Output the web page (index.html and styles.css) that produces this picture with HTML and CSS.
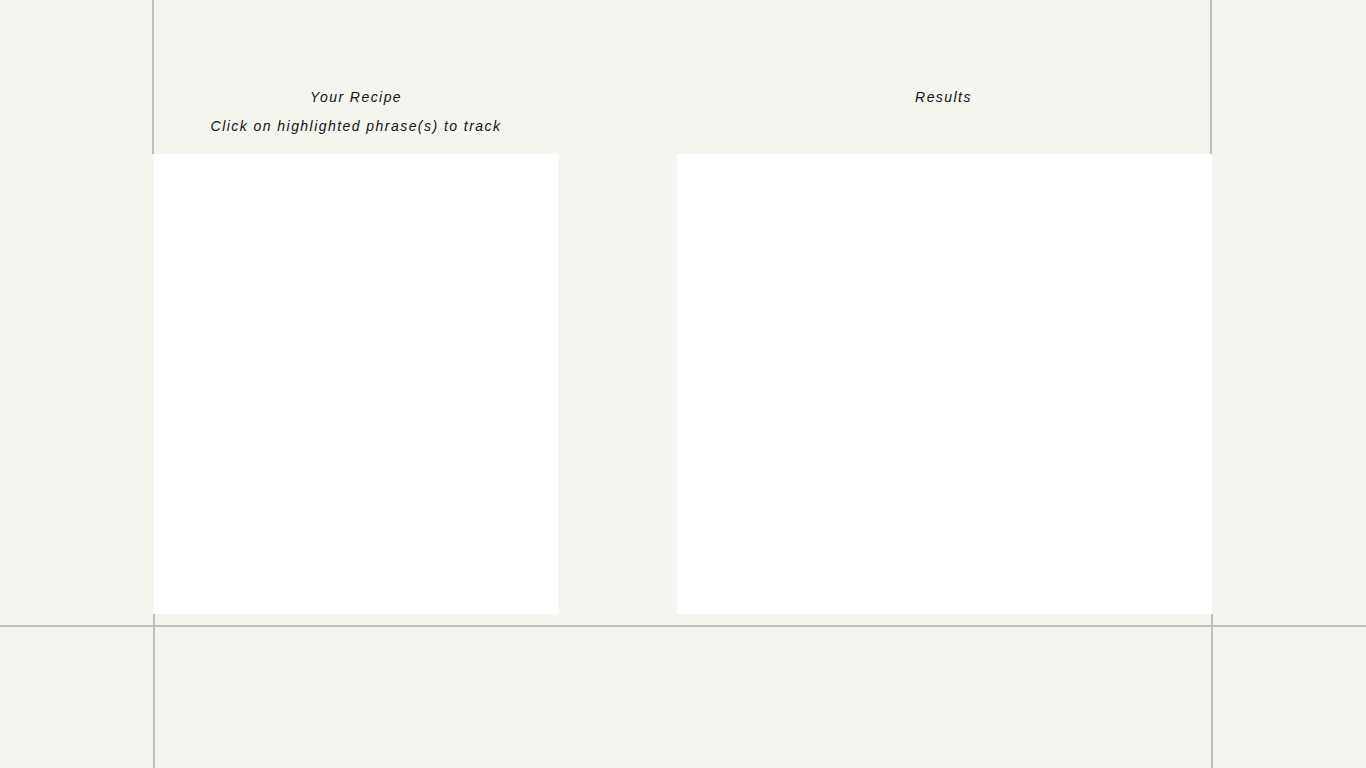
FILE: index.html
```html
<!DOCTYPE html>
<html lang="en">
<head>
<meta charset="utf-8">
<title>Recipe Tracker</title>
<link rel="stylesheet" href="styles.css">
</head>
<body>
  <header class="top">
    <div class="col col-left">
      <p class="title">Your Recipe</p>
      <p class="title">Click on highlighted phrase(s) to track</p>
    </div>
    <div class="col col-right">
      <p class="title">Results</p>
    </div>
  </header>
  <main class="panels">
    <section class="panel panel-left"></section>
    <section class="panel panel-right"></section>
  </main>
  <footer class="bottom">
    <div class="rail rail-short"></div>
    <div class="rule"></div>
    <div class="rail rail-long"></div>
  </footer>
</body>
</html>
```
FILE: styles.css
```css
html, body {
  margin: 0;
  padding: 0;
}
body {
  background: #f5f5f0;
  font-family: "Liberation Sans", Arial, sans-serif;
  color: #111;
  width: 1366px;
  height: 768px;
  overflow: hidden;
}
.top {
  margin-left: 152px;
  width: 1060px;
  height: 154px;
  box-sizing: border-box;
  border-left: 2px solid #bfbfbf;
  border-right: 2px solid #bfbfbf;
  display: flex;
  gap: 119px;
  padding-top: 83px;
}
.col-left {
  width: 404px;
}
.col-right {
  width: 533px;
}
.title {
  margin: 0;
  font-size: 14px;
  line-height: 29px;
  font-style: italic;
  letter-spacing: 1.45px;
  text-align: center;
}
.panels {
  margin-left: 154px;
  display: flex;
  gap: 119px;
  height: 460px;
}
.panel {
  background: #fff;
}
.panel-left {
  width: 404px;
}
.panel-right {
  width: 535px;
}
.rail {
  margin-left: 153px;
  width: 1060px;
  box-sizing: border-box;
  border-left: 2px solid #bfbfbf;
  border-right: 2px solid #bfbfbf;
}
.rail-short {
  height: 11px;
}
.rule {
  height: 2px;
  background: #bfbfbf;
}
.rail-long {
  height: 141px;
}
```
